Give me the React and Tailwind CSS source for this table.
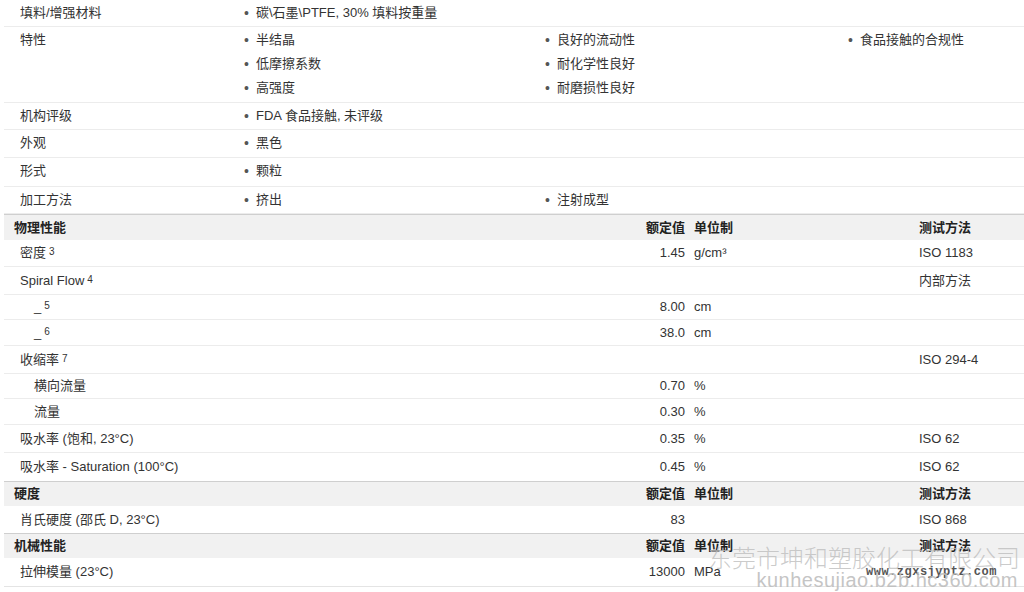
const font = { fontFamily: '"Liberation Sans", "Noto Sans CJK SC", sans-serif' };

const topRows = [
  { label: "填料/增强材料", h: "h-[27px]", cols: [["碳\\石墨\\PTFE, 30% 填料按重量"], [], []] },
  { label: "特性", h: "h-[76px]", cols: [["半结晶", "低摩擦系数", "高强度"], ["良好的流动性", "耐化学性良好", "耐磨损性良好"], ["食品接触的合规性"]] },
  { label: "机构评级", h: "h-[27px]", cols: [["FDA 食品接触, 未评级"], [], []] },
  { label: "外观", h: "h-[28px]", cols: [["黑色"], [], []] },
  { label: "形式", h: "h-[29px]", cols: [["颗粒"], [], []] },
  { label: "加工方法", h: "h-[27px]", cols: [["挤出"], ["注射成型"], []] },
];

const sections = [
  {
    title: "物理性能",
    hh: "h-[26px]",
    rows: [
      { label: "密度", sup: "3", value: "1.45", unit: "g/cm³", method: "ISO 1183", h: "h-[27px]" },
      { label: "Spiral Flow", sup: "4", value: "", unit: "", method: "内部方法", h: "h-[28px]" },
      { label: "_", sup: "5", sub: true, value: "8.00", unit: "cm", method: "", h: "h-[25px]" },
      { label: "_", sup: "6", sub: true, value: "38.0", unit: "cm", method: "", h: "h-[26px]" },
      { label: "收缩率", sup: "7", value: "", unit: "", method: "ISO 294-4", h: "h-[28px]" },
      { label: "横向流量", sub: true, value: "0.70", unit: "%", method: "", h: "h-[25px]" },
      { label: "流量", sub: true, value: "0.30", unit: "%", method: "", h: "h-[26px]" },
      { label: "吸水率 (饱和, 23°C)", value: "0.35", unit: "%", method: "ISO 62", h: "h-[28px]" },
      { label: "吸水率 - Saturation (100°C)", value: "0.45", unit: "%", method: "ISO 62", h: "h-[28px]" },
    ],
  },
  {
    title: "硬度",
    hh: "h-[25px]",
    rows: [{ label: "肖氏硬度 (邵氏 D, 23°C)", value: "83", unit: "", method: "ISO 868", h: "h-[27px]" }],
  },
  {
    title: "机械性能",
    hh: "h-[25px]",
    rows: [{ label: "拉伸模量 (23°C)", value: "13000", unit: "MPa", method: "", h: "h-[28px]" }],
  },
];

const grid = "grid grid-cols-[556px_125px_234px_1fr] items-center";

function Bullets({ items }) {
  return (
    <ul className="flex flex-col">
      {items.map((t) => (
        <li key={t} className="flex items-center h-6">
          <span className="w-3 text-[14px] leading-none text-[#555]">•</span>
          <span>{t}</span>
        </li>
      ))}
    </ul>
  );
}

export default function App() {
  return (
    <div className="relative w-[1024px] h-[592px] overflow-hidden bg-white text-[13px] text-[#333]" style={font}>
      <div className="ml-1">
        {topRows.map((r) => (
          <div key={r.label} className={`grid grid-cols-[240px_301px_303px_1fr] ${r.h} border-b border-[#ececec] pt-px`}>
            <div className="pl-4 h-6 flex items-center">{r.label}</div>
            {r.cols.map((c, i) => (
              <Bullets key={i} items={c} />
            ))}
          </div>
        ))}

        {sections.map((s) => (
          <div key={s.title}>
            <div className={`${grid} ${s.hh} bg-[#f1f1f1] border-t border-[#cfcfcf] font-bold text-[#222]`}>
              <div className="pl-[10px]">{s.title}</div>
              <div className="text-right">额定值</div>
              <div className="pl-[9px]">单位制</div>
              <div>测试方法</div>
            </div>
            {s.rows.map((r, i) => (
              <div key={i} className={`${grid} ${r.h} border-b border-[#ececec] last:border-b-0`}>
                <div className={r.sub ? "pl-[30px]" : "pl-4"}>
                  {r.label}
                  {r.sup && <sup className="text-[10px] ml-[3px] relative -top-[2px]">{r.sup}</sup>}
                </div>
                <div className="text-right">{r.value}</div>
                <div className="pl-[9px]">{r.unit}</div>
                <div>{r.method}</div>
              </div>
            ))}
          </div>
        ))}
        <div className="border-t border-[#e4e4e4]" />
      </div>

      <div className="absolute right-[4px] top-[542px] text-[24px] leading-[30px] text-[#bdbdbd]/80 whitespace-nowrap" style={{ fontFamily: '"Noto Sans CJK SC", sans-serif', fontWeight: 300 }}>
        东莞市坤和塑胶化工有限公司
      </div>
      <div className="absolute left-[866px] top-[563px] text-[12px] font-bold text-[#555] whitespace-nowrap tracking-[0.5px]" style={{ fontFamily: '"Liberation Mono", monospace' }}>
        www.zgxsjyptz.com
      </div>
      <div className="absolute right-[6px] top-[568px] text-[20px] leading-[24px] text-[#bdbdbd]/90 whitespace-nowrap tracking-[0.5px]" style={{ fontFamily: '"Liberation Sans", sans-serif' }}>
        kunhesujiao.b2b.hc360.com
      </div>
    </div>
  );
}
